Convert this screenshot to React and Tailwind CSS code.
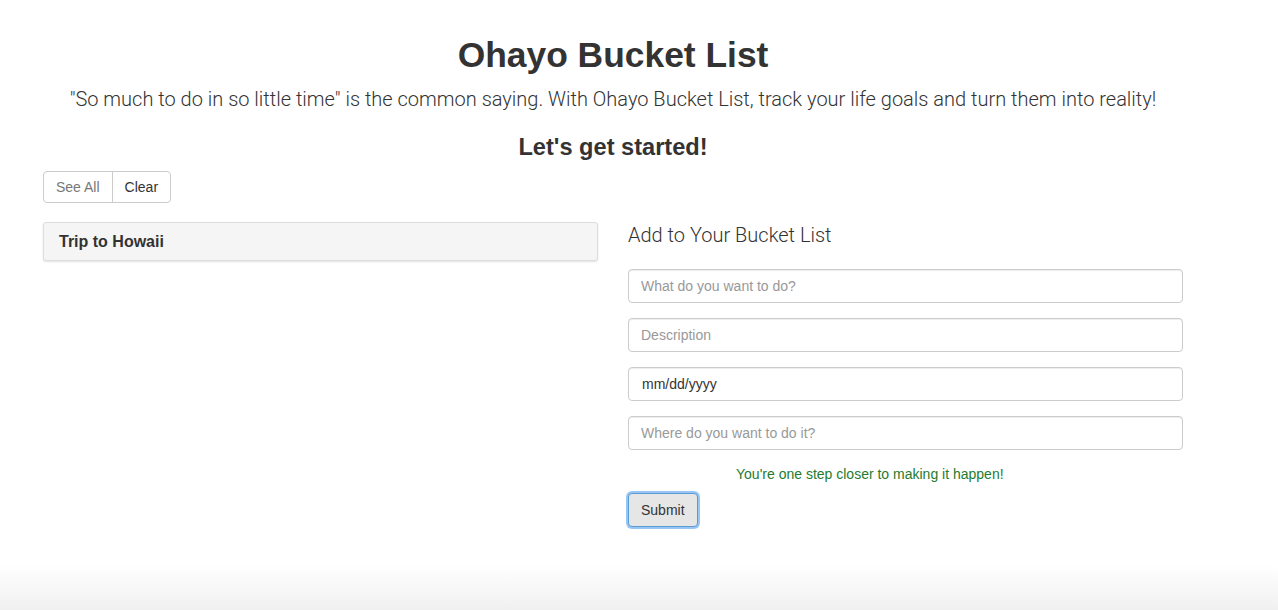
import React from "react";

export default function App() {
  return (
    <div className="relative min-h-[610px] w-full bg-white text-[#333] font-['Liberation_Sans',Arial,sans-serif] overflow-hidden">
      <div className="ml-[28px] w-[1170px]">
        <div className="flex flex-col items-center pt-[35px]">
          <h1 className="text-[35.4px] leading-[40px] font-bold text-[#333]">Ohayo Bucket List</h1>
          <p className="mt-[11px] text-[20px] leading-[26px] font-light text-[#333] font-['Roboto',sans-serif]">
            "So much to do in so little time" is the common saying. With Ohayo Bucket List, track your life goals and turn them into reality!
          </p>
          <h3 className="mt-[21px] text-[23.6px] leading-[28px] font-bold text-[#333]">Let's get started!</h3>
        </div>
        <div className="flex px-[15px] mt-[10px]">
          <div className="flex h-[32px] border border-[#ccc] rounded-[4px] text-[14px]">
            <button className="px-[12px] text-[#777] border-r border-[#ccc]">See All</button>
            <button className="px-[12px] text-[#333]">Clear</button>
          </div>
        </div>
        <div className="flex mt-[19px]">
          <div className="w-[585px] px-[15px]">
            <div className="h-[39px] bg-[#f5f5f5] border border-[#ddd] rounded-[3px] shadow-[0_1px_2px_rgba(0,0,0,0.12)] flex items-center px-[15px]">
              <span className="text-[16px] font-bold text-[#333]">Trip to Howaii</span>
            </div>
          </div>
          <div className="w-[585px] px-[15px]">
            <h4 className="text-[20px] leading-[26px] font-light text-[#333] font-['Roboto',sans-serif]">Add to Your Bucket List</h4>
            <div className="mt-[21px] flex flex-col gap-[15px]">
              <input className="h-[34px] w-full border border-[#ccc] rounded-[4px] px-[12px] text-[14px] placeholder:text-[#999] shadow-[inset_0_1px_1px_rgba(0,0,0,0.075)] outline-none" placeholder="What do you want to do?" />
              <input className="h-[34px] w-full border border-[#ccc] rounded-[4px] px-[12px] text-[14px] placeholder:text-[#999] shadow-[inset_0_1px_1px_rgba(0,0,0,0.075)] outline-none" placeholder="Description" />
              <div className="h-[34px] w-full border border-[#ccc] rounded-[4px] px-[13px] text-[14px] text-[#333] flex items-center shadow-[inset_0_1px_1px_rgba(0,0,0,0.075)]">mm/dd/yyyy</div>
              <input className="h-[34px] w-full border border-[#ccc] rounded-[4px] px-[12px] text-[14px] placeholder:text-[#999] shadow-[inset_0_1px_1px_rgba(0,0,0,0.075)] outline-none" placeholder="Where do you want to do it?" />
            </div>
            <p className="mt-[15px] pl-[108px] text-[14px] leading-[18px] text-[#257a2f]">You're one step closer to making it happen!</p>
            <button className="mt-[10px] h-[34px] px-[12px] bg-[#e6e6e6] border border-[#5b9bd5] rounded-[4px] text-[14px] text-[#333] shadow-[0_0_0_2px_rgba(82,158,238,0.6)]">Submit</button>
          </div>
        </div>
      </div>
      <div className="absolute left-0 right-0 bottom-0 h-[45px] bg-gradient-to-b from-[rgba(245,245,245,0)] to-[rgba(240,240,240,1)]"></div>
    </div>
  );
}
